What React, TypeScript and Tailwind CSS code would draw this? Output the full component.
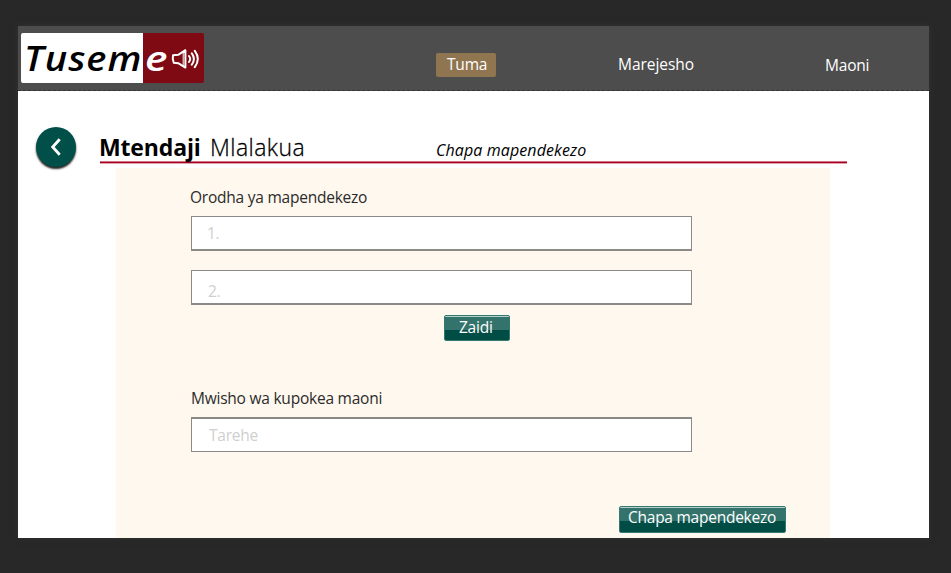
import type { ReactNode } from 'react';

function Logo() {
  return (
    <div className="mt-[7px] ml-[3px] flex h-[50px] w-[183px] shrink-0 overflow-hidden rounded-[2px] text-[35px] leading-[50px] font-semibold italic">
      <div className="w-[122px] bg-white pl-[3px] text-black">
        <span className="inline-block origin-left scale-x-[1.09] tracking-[0.9px] whitespace-nowrap">Tusem</span>
      </div>
      <div className="flex w-[61px] bg-[#7f0a13] pl-[2px] text-white">
        <span className="w-[26px] origin-left scale-x-[1.22]">e</span>
        <svg className="mt-[15px] h-[22px] w-[29px]" viewBox="0 0 29 22" fill="none" stroke="currentColor" strokeWidth="2" strokeLinecap="round" strokeLinejoin="round">
          <path d="M2 7.2 L7.2 6.8 L14.4 2.2 V19.6 L7.2 15.2 L2.8 14.8 Q1.2 11 2 7.2Z" />
          <path d="M12.2 4v14" strokeWidth="1" />
          <path d="M18 8q2.4 3 0 6M20.8 5.4q4.2 5.5 0 11.2M23.8 2.8q6 8 0 16.4" />
        </svg>
      </div>
    </div>
  );
}

function Field({ children, className }: { children?: ReactNode; className: string }) {
  return (
    <div className={`w-[501px] border border-[#8c8a87] bg-white text-[15.5px] leading-5 tracking-[-0.25px] text-[#cfcfcf] ${className}`}>
      {children}
    </div>
  );
}

function Button({ children, className }: { children: ReactNode; className: string }) {
  return (
    <button
      className={`flex items-start rounded-[2px] border border-[#347870] bg-[linear-gradient(to_bottom,#b5cecb_0,#b5cecb_1px,#33736c_1px,#33736c_14px,#004d46_14px)] text-left text-[15.5px] leading-5 tracking-[-0.25px] whitespace-nowrap text-white ${className}`}
    >
      {children}
    </button>
  );
}

export default function App() {
  return (
    <div className="h-[573px] w-[951px] overflow-hidden bg-[#282828] pt-[26px] pl-[18px] font-['Open_Sans','Noto_Sans',sans-serif]">
      <div className="h-[512px] w-[911px] overflow-hidden bg-white shadow-[0_0_6px_#333]">
        <header className="flex h-[65px] border-b border-dashed border-[#333] bg-[#4d4d4d] text-[15.5px] leading-5 tracking-[-0.2px] text-white">
          <Logo />
          <nav className="flex">
            <a className="mt-[27px] ml-[232px] h-6 w-[60px] rounded-[2px] bg-[#8f7650] pt-[1px] pl-[11px]">Tuma</a>
            <a className="mt-[28px] ml-[122px] w-[74px] tracking-[-0.05px]">Marejesho</a>
            <a className="mt-[29px] ml-[133px]">Maoni</a>
          </nav>
        </header>

        <div className="flex h-[77px]">
          <button className="mt-[36px] ml-[18px] flex h-10 w-10 items-center justify-center rounded-full bg-[#004f49] shadow-[0_2px_2px_#222]">
            <svg className="h-5 w-5" viewBox="0 0 20 20" fill="none" stroke="white" strokeWidth="2.8">
              <path d="M13.7 2.3 L6.7 10 L13.7 17.7" />
            </svg>
          </button>
          <div className="ml-[24px] flex h-[72px] w-[747px] border-b border-[#a50021] text-black shadow-[0_1px_0_#dfa0ac,inset_0_-1px_0_#cf7083]">
            <h1 className="mt-[41px] -ml-px w-[111px] text-[23px] leading-[30px] font-bold tracking-[-0.15px] whitespace-nowrap">Mtendaji</h1>
            <span className="mt-[41px] w-[226px] text-[23px] leading-[30px] font-light tracking-[0.45px] whitespace-nowrap [-webkit-text-stroke:0.3px_black]">Mlalakua</span>
            <em className="mt-[49px] text-[16px] leading-5 tracking-[0.1px] whitespace-nowrap">Chapa mapendekezo</em>
          </div>
        </div>

        <main className="ml-[98px] h-[370px] w-[714px] bg-[#fff8ee] pl-[75px]">
          <p className="-ml-px h-[48px] pt-[19px] text-[15.5px] leading-5 tracking-[-0.23px] text-[#2b2b2b]">Orodha ya mapendekezo</p>
          <Field className="h-[35px] border-b-2 pt-[6px] pl-[15px]">1.</Field>
          <Field className="mt-[19px] h-[35px] border-b-2 pt-[10px] pl-[16px]">2.</Field>
          <Button className="mt-[10px] ml-[253px] h-[26px] w-[66px] pt-[1px] pl-[14px]">Zaidi</Button>
          <p className="mt-[47px] h-[29px] text-[15.5px] leading-5 tracking-[-0.23px] text-[#2b2b2b]">Mwisho wa kupokea maoni</p>
          <Field className="h-[35px] border-t-2 pt-[6px] pl-[17px]">Tarehe</Field>
          <Button className="mt-[54px] ml-[428px] h-[27px] w-[167px] pl-[8px]">Chapa mapendekezo</Button>
        </main>
      </div>
    </div>
  );
}
